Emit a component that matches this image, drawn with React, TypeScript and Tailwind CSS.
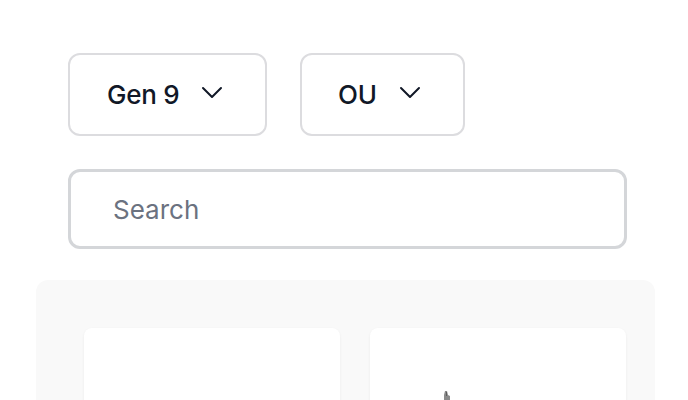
import { useState } from 'react'

function Chevron() {
  return (
    <svg width="22" height="13" viewBox="0 0 22 13" fill="none" className="mb-[4px] shrink-0">
      <path d="M2 2l9 9 9-9" stroke="#111827" strokeWidth="2" strokeLinecap="round" strokeLinejoin="round" />
    </svg>
  )
}

interface SelectProps {
  label: string
  width: string
  textPad: string
}

function FakeSelect({ label, width, textPad }: SelectProps) {
  return (
    <button
      className={`flex h-[83px] items-center gap-[22px] rounded-[12px] border-2 border-[#dcdcdf] bg-white ${width} ${textPad}`}
    >
      <span className="text-[26px] font-medium leading-none tracking-[-0.01em] text-[#111827]">{label}</span>
      <Chevron />
    </button>
  )
}

export default function App() {
  const [query, setQuery] = useState('')

  return (
    <div className="h-[400px] w-full overflow-hidden bg-white" style={{ fontFamily: 'Inter, "Noto Sans", sans-serif' }}>
      <div className="px-[68px] pt-[53px]">
        <div className="flex gap-[33px]">
          <FakeSelect label="Gen 9" width="w-[199px]" textPad="pl-[37px]" />
          <FakeSelect label="OU" width="w-[165px]" textPad="pl-[36px]" />
        </div>

        <input
          value={query}
          onChange={(e) => setQuery(e.target.value)}
          placeholder="Search"
          className="mt-[33px] block h-[80px] w-[559px] rounded-[12px] border-[3px] border-[#d4d6d9] bg-white pl-[42px] text-[26px] text-[#111827] outline-none placeholder:text-[#6b7280]"
        />
      </div>

      <div className="ml-[36px] mt-[31px] w-[619px] rounded-[12px] bg-[#f9f9f9] pl-[48px] pt-[48px]">
        <div className="flex gap-[30px]">
          <div className="h-[120px] w-[256px] rounded-[8px] bg-white shadow-[0_1px_3px_rgba(0,0,0,0.06)]" />
          <div className="h-[120px] w-[256px] rounded-[8px] bg-white shadow-[0_1px_3px_rgba(0,0,0,0.06)]">
            <div className="pl-[72px] pt-[62px]">
              <svg width="10" height="12" viewBox="0 0 10 12">
                <path d="M3 1h2l1 4 2 1v6H2V5z" fill="#8a8a8a" />
                <path d="M4 2h1v4H4z" fill="#5c5c5c" />
              </svg>
            </div>
          </div>
        </div>
      </div>
    </div>
  )
}
